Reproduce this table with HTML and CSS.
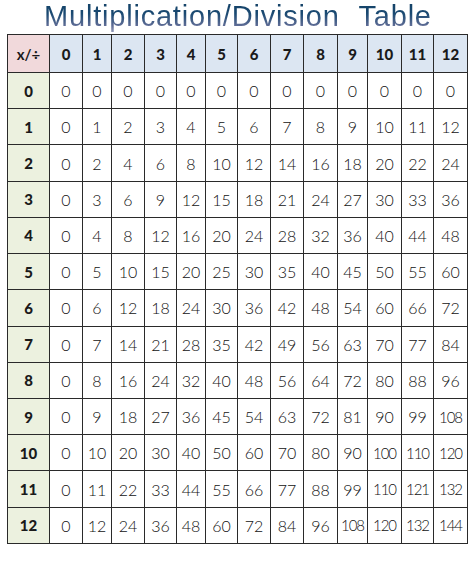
FILE: index.html
```html
<!DOCTYPE html>
<html lang="en">
<head>
<meta charset="utf-8">
<title>Multiplication/Division Table</title>
<link rel="stylesheet" href="styles.css">
</head>
<body>
<div class="page">
  <h1 class="title">Multiplication/Division&nbsp;Table</h1>
  <table class="grid">
    <colgroup>
      <col class="w42"><col class="w33"><col class="w29"><col class="w33"><col class="w32"><col class="w29"><col class="w32"><col class="w33"><col class="w33"><col class="w34"><col class="w30"><col class="w34"><col class="w32"><col class="w34">
    </colgroup>
    <thead>
      <tr class="hrow">
        <th class="corner">x/÷</th>
        <th>0</th><th>1</th><th>2</th><th>3</th><th>4</th><th>5</th><th>6</th><th>7</th><th>8</th><th>9</th><th>10</th><th>11</th><th>12</th>
      </tr>
    </thead>
    <tbody id="body"></tbody>
  </table>
</div>
<script src="script.js"></script>
</body>
</html>
```
FILE: script.js
```js
const tbody = document.getElementById('body');
for (let r = 0; r <= 12; r++) {
  const tr = document.createElement('tr');
  tr.className = 'brow';
  const th = document.createElement('th');
  th.className = 'side';
  th.textContent = r;
  tr.appendChild(th);
  for (let c = 0; c <= 12; c++) {
    const td = document.createElement('td');
    const v = r * c;
    td.textContent = v;
    if (v >= 100) td.className = 'big';
    tr.appendChild(td);
  }
  tbody.appendChild(tr);
}
```
FILE: styles.css
```css
html, body {
  margin: 0;
  padding: 0;
  background: #ffffff;
}

.page {
  width: 474px;
  height: 577px;
  padding-left: 7px;
  box-sizing: border-box;
}

.title {
  margin: 0;
  height: 34px;
  box-sizing: border-box;
  padding-left: 37px;
  font-family: "Liberation Sans", "Open Sans", sans-serif;
  font-weight: 400;
  font-size: 29px;
  line-height: 33px;
  letter-spacing: 0.8px;
  word-spacing: 10px;
  white-space: nowrap;
  background: linear-gradient(to bottom, #123f63 0%, #1a4a72 40%, #5e6c95 75%, #a2a6c2 100%);
  -webkit-background-clip: text;
  background-clip: text;
  color: transparent;
}

.grid {
  border-collapse: collapse;
  table-layout: fixed;
  width: 460px;
  font-family: "Lato", "Liberation Sans", sans-serif;
  color: #1a1a1a;
}

.w42 { width: 42px; }
.w34 { width: 34px; }
.w33 { width: 33px; }
.w32 { width: 32px; }
.w30 { width: 30px; }
.w29 { width: 29px; }

.grid th,
.grid td {
  border: 1px solid #2a2a2a;
  padding: 0;
  text-align: center;
  vertical-align: middle;
  overflow: hidden;
  white-space: nowrap;
}

.grid td {
  font-size: 16px;
  font-weight: 300;
  color: #111;
}

.grid td.big {
  font-size: 15px;
  letter-spacing: -1px;
}

.grid td:nth-child(odd) {
  border-left-color: #666;
}

.hrow {
  height: 38px;
}

.hrow th {
  background: #dce6f2;
  font-size: 15px;
  font-weight: 900;
}

.hrow th.corner {
  background: #f1d9db;
  font-weight: 700;
  font-size: 15px;
}

.brow {
  height: 36.23px;
}

.brow th.side {
  background: #ecf1df;
  font-size: 15px;
  font-weight: 900;
}
```
